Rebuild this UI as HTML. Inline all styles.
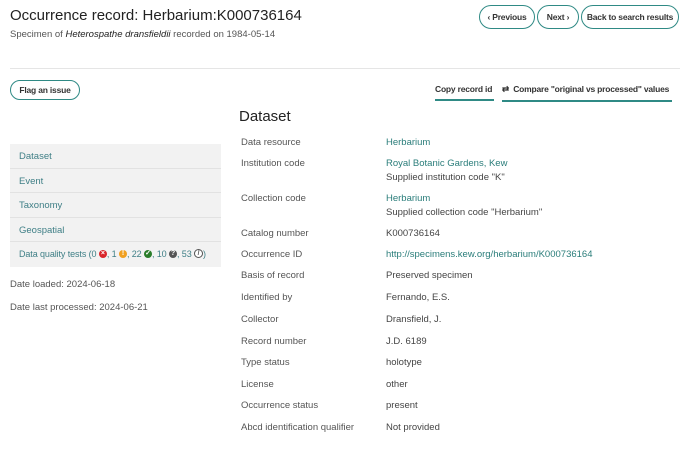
<!DOCTYPE html>
<html><head><style>
body{margin:0;width:680px;height:449px;background:#fff;font-family:"Liberation Sans",sans-serif;color:#222;position:relative;overflow:hidden}
.a{position:absolute;white-space:nowrap}
.btn{position:absolute;border:1.5px solid #2f8a85;border-radius:12px;font-size:8.5px;font-weight:bold;color:#333;display:flex;align-items:center;justify-content:center;box-sizing:border-box;white-space:nowrap;letter-spacing:-0.2px}
.lbl{position:absolute;left:241px;font-size:9.5px;color:#555}
.val{position:absolute;left:386px;font-size:9.5px;color:#444}
.lk{color:#2a7d7a}
.side{position:absolute;left:10px;top:144px;width:211px;background:#f2f2f2}
.side div{height:24.5px;line-height:25px;border-bottom:1px solid #e2e2e2;padding-left:9px;font-size:9.5px;color:#3f7f86;box-sizing:border-box;white-space:nowrap}
.ic{display:inline-block;width:8px;height:8px;border-radius:50%;vertical-align:middle;color:#fff;font-size:7px;line-height:8px;text-align:center;font-weight:bold;margin-top:-2px}
</style></head><body>
<div class="a" style="left:10px;top:7px;font-size:15px;color:#222">Occurrence record: Herbarium:K000736164</div>
<div class="a" style="left:10px;top:29px;font-size:9.5px;color:#555">Specimen of <i style="color:#222">Heterospathe dransfieldii</i> recorded on 1984-05-14</div>
<div class="btn" style="left:479px;top:5px;width:56px;height:24px">‹&nbsp;Previous</div>
<div class="btn" style="left:537px;top:5px;width:42px;height:24px">Next&nbsp;›</div>
<div class="btn" style="left:581px;top:5px;width:98px;height:24px">Back to search results</div>
<div class="a" style="left:10px;top:68px;width:670px;height:1px;background:#e5e5e5"></div>
<div class="btn" style="left:10px;top:80px;width:70px;height:20px;border-radius:10px">Flag an issue</div>
<div class="a" style="left:435px;top:84px;width:59px;font-size:8.5px;font-weight:bold;color:#333;border-bottom:2px solid #2f8a85;padding-bottom:5px;letter-spacing:-0.2px">Copy record id</div>
<div class="a" style="left:502px;top:84px;width:170px;font-size:8.5px;font-weight:bold;color:#333;border-bottom:2px solid #2f8a85;padding-bottom:5px;letter-spacing:-0.2px">⇄&nbsp; Compare "original vs processed" values</div>
<div class="a" style="left:239px;top:108px;font-size:15px;color:#222">Dataset</div>
<div class="side">
<div>Dataset</div><div>Event</div><div>Taxonomy</div><div>Geospatial</div>
<div style="border:none;font-size:9px;letter-spacing:-0.1px">Data quality tests (0 <span class="ic" style="background:#d9262b">×</span>, 1 <span class="ic" style="background:#f0a020">!</span>, 22 <span class="ic" style="background:#2a7d2a">✓</span>, 10 <span class="ic" style="background:#555">?</span>, 53 <span class="ic" style="background:#fff;border:1px solid #555;color:#555;width:7px;height:7px;line-height:7px">/</span>)</div>
</div>
<div class="a" style="left:10px;top:279px;font-size:9.5px;color:#555">Date loaded: 2024-06-18</div>
<div class="a" style="left:10px;top:302px;font-size:9.5px;color:#555">Date last processed: 2024-06-21</div>
<div class="lbl" style="top:137px">Data resource</div><div class="val lk" style="top:137px">Herbarium</div>
<div class="lbl" style="top:158px">Institution code</div><div class="val lk" style="top:158px">Royal Botanic Gardens, Kew</div><div class="val" style="top:172px">Supplied institution code "K"</div>
<div class="lbl" style="top:193px">Collection code</div><div class="val lk" style="top:193px">Herbarium</div><div class="val" style="top:207px">Supplied collection code "Herbarium"</div>
<div class="lbl" style="top:228px">Catalog number</div><div class="val" style="top:228px">K000736164</div>
<div class="lbl" style="top:249px">Occurrence ID</div><div class="val lk" style="top:249px">http://specimens.kew.org/herbarium/K000736164</div>
<div class="lbl" style="top:270px">Basis of record</div><div class="val" style="top:270px">Preserved specimen</div>
<div class="lbl" style="top:292px">Identified by</div><div class="val" style="top:292px">Fernando, E.S.</div>
<div class="lbl" style="top:314px">Collector</div><div class="val" style="top:314px">Dransfield, J.</div>
<div class="lbl" style="top:336px">Record number</div><div class="val" style="top:336px">J.D. 6189</div>
<div class="lbl" style="top:357px">Type status</div><div class="val" style="top:357px">holotype</div>
<div class="lbl" style="top:379px">License</div><div class="val" style="top:379px">other</div>
<div class="lbl" style="top:400px">Occurrence status</div><div class="val" style="top:400px">present</div>
<div class="lbl" style="top:422px">Abcd identification qualifier</div><div class="val" style="top:422px">Not provided</div>
</body></html>
